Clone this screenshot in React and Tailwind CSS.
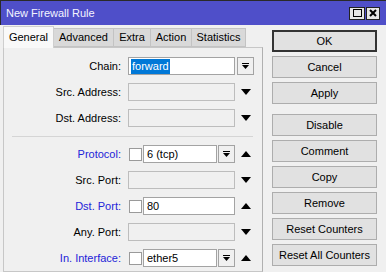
import React from "react";

const font = { fontFamily: '"Liberation Sans", Arial, sans-serif' };

const DropGlyph = () => (
  <svg width="9" height="7" viewBox="0 0 9 7">
    <rect x="1" y="0" width="7" height="1" fill="#000" />
    <path d="M1 2 H8 L4.5 6 Z" fill="#000" />
  </svg>
);

const Tri = ({ up }) => (
  <svg width="10" height="6" viewBox="0 0 10 6">
    {up ? <path d="M0 6 H10 L5 0 Z" fill="#000" /> : <path d="M0 0 H10 L5 6 Z" fill="#000" />}
  </svg>
);

const Label = ({ text, blue }) => (
  <div
    className={
      "w-[116px] shrink-0 text-right text-[11px] leading-none " +
      (blue ? "text-[#2323d8]" : "text-black")
    }
  >
    {text}
  </div>
);

const DropBtn = ({ className }) => (
  <div
    className={
      "h-[18px] w-[17px] border border-[#a3a3a3] bg-[#f0f0f0] flex items-center justify-center " +
      className
    }
  >
    <DropGlyph />
  </div>
);

const Check = () => (
  <div className="ml-[8px] h-[13px] w-[13px] shrink-0 border border-[#9a9a9a] bg-white" />
);

const Row = ({ children, className = "" }) => (
  <div className={"flex items-center h-[18px] " + className}>{children}</div>
);

const EmptyRow = ({ label, className }) => (
  <Row className={className}>
    <Label text={label} />
    <div className="ml-[7px] h-[18px] w-[107px] border border-[#bdbdbd] bg-[#f0f0f0]" />
    <div className="ml-[6px] flex items-center">
      <Tri />
    </div>
  </Row>
);

const Btn = ({ label, def, className = "" }) => (
  <div
    className={
      "h-[22px] w-[105px] flex items-center justify-center text-[11px] text-black bg-[#e1e1e1] " +
      (def ? "border-2 border-[#333333] " : "border border-[#adadad] ") +
      className
    }
  >
    {label}
  </div>
);

export default function App() {
  const tabs = [
    { name: "Advanced", w: "w-[60px]" },
    { name: "Extra", w: "w-[37px]" },
    { name: "Action", w: "w-[41px]" },
    { name: "Statistics", w: "w-[54px]" },
  ];

  return (
    <div
      className="w-[386px] h-[272px] overflow-hidden bg-[#f0f0f0] flex flex-col"
      style={font}
    >
      {/* title bar */}
      <div className="h-[25px] shrink-0 bg-[#4f4fc9] border-t border-l border-[#2a2a2a] flex items-center justify-between pl-[5px] pr-[6px]">
        <span className="text-[11px] text-[#f4f4ff] leading-none">New Firewall Rule</span>
        <div className="flex gap-[1px]">
          <div className="h-[13px] w-[16px] bg-[#e6e6e6] border border-[#222] flex items-center justify-center">
            <div className="h-[8px] w-[9px] border border-black" />
          </div>
          <div className="h-[13px] w-[14px] bg-[#e6e6e6] border border-[#222] flex items-center justify-center">
            <svg width="8" height="8" viewBox="0 0 8 8">
              <path d="M1 1 L7 7 M7 1 L1 7" stroke="#000" strokeWidth="2" />
            </svg>
          </div>
        </div>
      </div>

      <div className="flex flex-1">
        {/* tabs + panel */}
        <div className="ml-[3px] w-[260px] flex flex-col">
          <div className="flex items-end h-[22px]">
            <div className="relative z-10 -mb-px h-[22px] w-[51px] border border-b-0 border-[#cfcfcf] bg-[#f9f9f9] flex items-center justify-center text-[11px] text-black">
              General
            </div>
            {tabs.map((t) => (
              <div
                key={t.name}
                className={
                  "h-[19px] border border-l-0 border-[#c3c3c3] bg-[#d9d9d9] flex items-center justify-center text-[11px] text-black " +
                  t.w
                }
              >
                {t.name}
              </div>
            ))}
          </div>
          <div className="flex-1 border border-[#c7c7c7] border-r-[#b0b0b0] bg-[#f0f0f0] pt-[9px] pl-[1px] h-[240px]">
            <Row>
              <Label text="Chain:" />
              <div className="ml-[7px] h-[18px] w-[107px] border border-[#a3a3a3] bg-white flex items-center pl-[2px]">
                <span className="bg-[#0078d7] text-white text-[11px] leading-[15px] px-px">forward</span>
              </div>
              <DropBtn className="ml-[2px]" />
            </Row>
            <EmptyRow label="Src. Address:" className="mt-[8px]" />
            <EmptyRow label="Dst. Address:" className="mt-[8px]" />

            <div className="mt-[9px] ml-[7px] mr-[9px] h-px bg-[#d5d5d5]" />

            <Row className="mt-[8px]">
              <Label text="Protocol:" blue />
              <Check />
              <div className="ml-[1px] h-[18px] w-[74px] border border-[#a3a3a3] bg-white flex items-center pl-[3px] text-[11px] text-black">
                6 (tcp)
              </div>
              <DropBtn className="ml-[1px]" />
              <div className="ml-[6px] flex items-center">
                <Tri up />
              </div>
            </Row>
            <EmptyRow label="Src. Port:" className="mt-[8px]" />
            <Row className="mt-[8px]">
              <Label text="Dst. Port:" blue />
              <Check />
              <div className="ml-[1px] h-[18px] w-[92px] border border-[#a3a3a3] bg-white flex items-center pl-[3px] text-[11px] text-black">
                80
              </div>
              <div className="ml-[6px] flex items-center">
                <Tri up />
              </div>
            </Row>
            <EmptyRow label="Any. Port:" className="mt-[8px]" />
            <Row className="mt-[8px]">
              <Label text="In. Interface:" blue />
              <Check />
              <div className="ml-[1px] h-[18px] w-[74px] border border-[#a3a3a3] bg-white flex items-center pl-[3px] text-[11px] text-black">
                ether5
              </div>
              <DropBtn className="ml-[1px]" />
              <div className="ml-[6px] flex items-center">
                <Tri up />
              </div>
            </Row>
          </div>
        </div>

        {/* buttons */}
        <div className="ml-[9px] pt-[5px] flex flex-col gap-[4px]">
          <Btn label="OK" def />
          <Btn label="Cancel" />
          <Btn label="Apply" />
          <Btn label="Disable" className="mt-[6px]" />
          <Btn label="Comment" />
          <Btn label="Copy" />
          <Btn label="Remove" />
          <Btn label="Reset Counters" />
          <Btn label="Reset All Counters" />
        </div>
      </div>
    </div>
  );
}
